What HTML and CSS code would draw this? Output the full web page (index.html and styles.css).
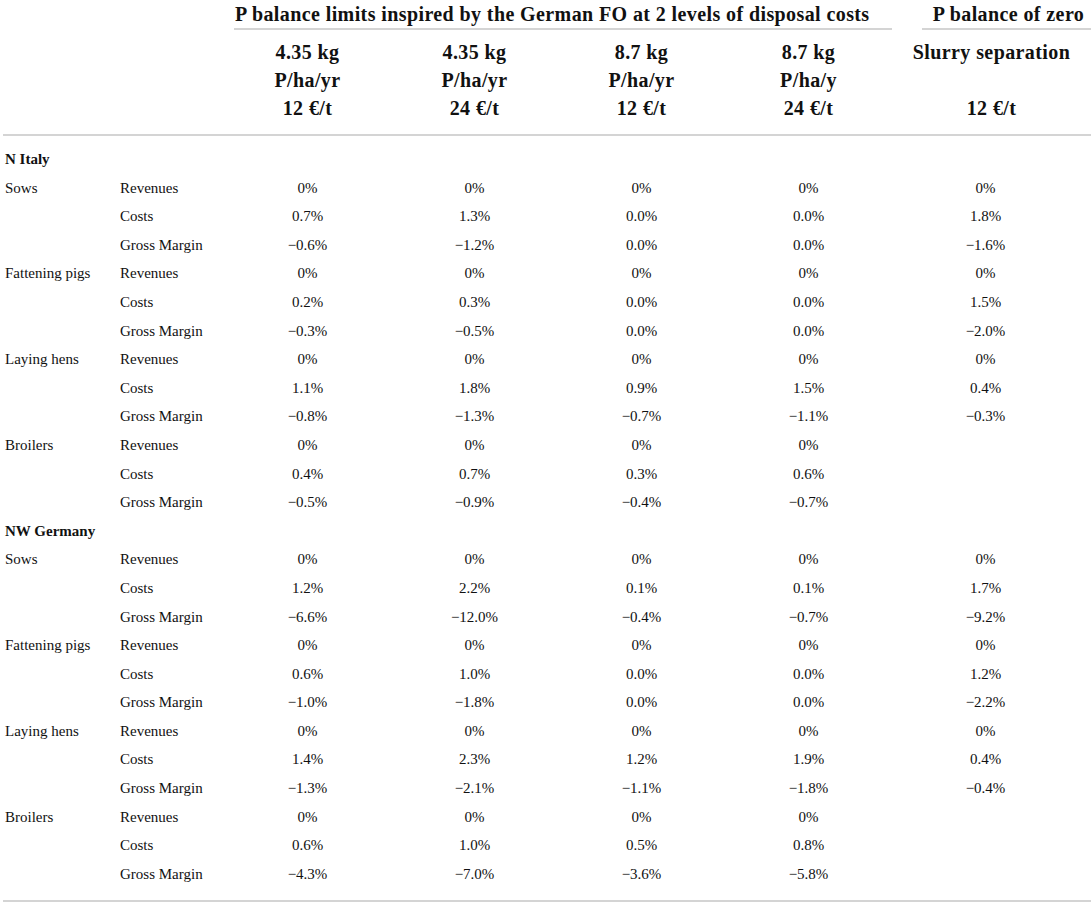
FILE: index.html
```html
<!DOCTYPE html>
<html lang="en">
<head>
  <meta charset="UTF-8">
  <meta name="viewport" content="width=device-width, initial-scale=1.0">
  <title>P balance limits - cost effects</title>
  <link rel="stylesheet" href="styles.css">
</head>
<body>
  <table class="results">
    <colgroup>
      <col class="c-farm">
      <col class="c-item">
      <col class="c-val">
      <col class="c-val">
      <col class="c-val">
      <col class="c-val">
      <col class="c-last">
    </colgroup>
    <thead>
      <tr class="group-row">
        <th colspan="2"></th>
        <th colspan="4"><div class="group-title first">P balance limits inspired by the German FO at 2 levels of disposal costs</div></th>
        <th><div class="group-title last">P balance of zero</div></th>
      </tr>
      <tr class="scenario-row">
        <th colspan="2"></th>
        <th>4.35 kg<br>P/ha/yr<br>12 €/t</th>
        <th>4.35 kg<br>P/ha/yr<br>24 €/t</th>
        <th>8.7 kg<br>P/ha/yr<br>12 €/t</th>
        <th>8.7 kg<br>P/ha/y<br>24 €/t</th>
        <th>Slurry separation<br>&nbsp;<br>12 €/t</th>
      </tr>
    </thead>
    <tbody>
      <tr class="region first-region"><td colspan="7">N Italy</td></tr>
      <tr><td>Sows</td><td>Revenues</td><td>0%</td><td>0%</td><td>0%</td><td>0%</td><td>0%</td></tr>
      <tr><td></td><td>Costs</td><td>0.7%</td><td>1.3%</td><td>0.0%</td><td>0.0%</td><td>1.8%</td></tr>
      <tr><td></td><td>Gross Margin</td><td>−0.6%</td><td>−1.2%</td><td>0.0%</td><td>0.0%</td><td>−1.6%</td></tr>
      <tr><td>Fattening pigs</td><td>Revenues</td><td>0%</td><td>0%</td><td>0%</td><td>0%</td><td>0%</td></tr>
      <tr><td></td><td>Costs</td><td>0.2%</td><td>0.3%</td><td>0.0%</td><td>0.0%</td><td>1.5%</td></tr>
      <tr><td></td><td>Gross Margin</td><td>−0.3%</td><td>−0.5%</td><td>0.0%</td><td>0.0%</td><td>−2.0%</td></tr>
      <tr><td>Laying hens</td><td>Revenues</td><td>0%</td><td>0%</td><td>0%</td><td>0%</td><td>0%</td></tr>
      <tr><td></td><td>Costs</td><td>1.1%</td><td>1.8%</td><td>0.9%</td><td>1.5%</td><td>0.4%</td></tr>
      <tr><td></td><td>Gross Margin</td><td>−0.8%</td><td>−1.3%</td><td>−0.7%</td><td>−1.1%</td><td>−0.3%</td></tr>
      <tr><td>Broilers</td><td>Revenues</td><td>0%</td><td>0%</td><td>0%</td><td>0%</td><td></td></tr>
      <tr><td></td><td>Costs</td><td>0.4%</td><td>0.7%</td><td>0.3%</td><td>0.6%</td><td></td></tr>
      <tr><td></td><td>Gross Margin</td><td>−0.5%</td><td>−0.9%</td><td>−0.4%</td><td>−0.7%</td><td></td></tr>
      <tr class="region"><td colspan="7">NW Germany</td></tr>
      <tr><td>Sows</td><td>Revenues</td><td>0%</td><td>0%</td><td>0%</td><td>0%</td><td>0%</td></tr>
      <tr><td></td><td>Costs</td><td>1.2%</td><td>2.2%</td><td>0.1%</td><td>0.1%</td><td>1.7%</td></tr>
      <tr><td></td><td>Gross Margin</td><td>−6.6%</td><td>−12.0%</td><td>−0.4%</td><td>−0.7%</td><td>−9.2%</td></tr>
      <tr><td>Fattening pigs</td><td>Revenues</td><td>0%</td><td>0%</td><td>0%</td><td>0%</td><td>0%</td></tr>
      <tr><td></td><td>Costs</td><td>0.6%</td><td>1.0%</td><td>0.0%</td><td>0.0%</td><td>1.2%</td></tr>
      <tr><td></td><td>Gross Margin</td><td>−1.0%</td><td>−1.8%</td><td>0.0%</td><td>0.0%</td><td>−2.2%</td></tr>
      <tr><td>Laying hens</td><td>Revenues</td><td>0%</td><td>0%</td><td>0%</td><td>0%</td><td>0%</td></tr>
      <tr><td></td><td>Costs</td><td>1.4%</td><td>2.3%</td><td>1.2%</td><td>1.9%</td><td>0.4%</td></tr>
      <tr><td></td><td>Gross Margin</td><td>−1.3%</td><td>−2.1%</td><td>−1.1%</td><td>−1.8%</td><td>−0.4%</td></tr>
      <tr><td>Broilers</td><td>Revenues</td><td>0%</td><td>0%</td><td>0%</td><td>0%</td><td></td></tr>
      <tr><td></td><td>Costs</td><td>0.6%</td><td>1.0%</td><td>0.5%</td><td>0.8%</td><td></td></tr>
      <tr class="last-row"><td></td><td>Gross Margin</td><td>−4.3%</td><td>−7.0%</td><td>−3.6%</td><td>−5.8%</td><td></td></tr>
    </tbody>
  </table>
</body>
</html>
```

FILE: styles.css
```css
/* Tabela de resultados */
body {
  font-family: "Liberation Serif", "Times New Roman", serif;
  background-color: #fff;
  color: #111;
  margin: 0;
  padding: 0 0 0 3px;
}

.results {
  width: 1088px;
  border-collapse: collapse;
  table-layout: fixed;
  font-size: 15px;
}

.c-farm {
  width: 117px;
}

.c-item {
  width: 104px;
}

.c-val {
  width: 167px;
}

.c-last {
  width: 199px;
}

.results th {
  font-weight: bold;
  font-size: 20px;
  letter-spacing: 0.4px;
  padding: 0;
  text-align: center;
  vertical-align: top;
}

.group-row th {
  height: 31px;
}

.group-title {
  line-height: 28px;
  border-bottom: 2px solid #d4d4d4;
  white-space: nowrap;
}

.group-title.first {
  margin: 0 0 0 10px;
  padding-left: 1px;
  text-align: left;
}

.group-title.last {
  margin: 0 0 0 30px;
  padding-left: 4px;
}

.scenario-row th {
  line-height: 28px;
  padding: 7px 0 12px;
  border-bottom: 2px solid #d4d4d4;
  white-space: nowrap;
}

.results td {
  padding: 0;
  line-height: 28.6px;
  text-align: center;
  vertical-align: top;
  white-space: nowrap;
}

.results td:nth-child(1),
.results td:nth-child(2) {
  text-align: left;
}

.results td:nth-child(1) {
  padding-left: 2px;
}

.results td:nth-child(7) {
  padding-right: 12px;
}

.region td {
  font-weight: bold;
  text-align: left;
  padding-left: 2px;
}

.first-region td {
  padding-top: 9px;
}

.last-row td {
  padding-bottom: 12px;
  border-bottom: 2px solid #d4d4d4;
}
```
